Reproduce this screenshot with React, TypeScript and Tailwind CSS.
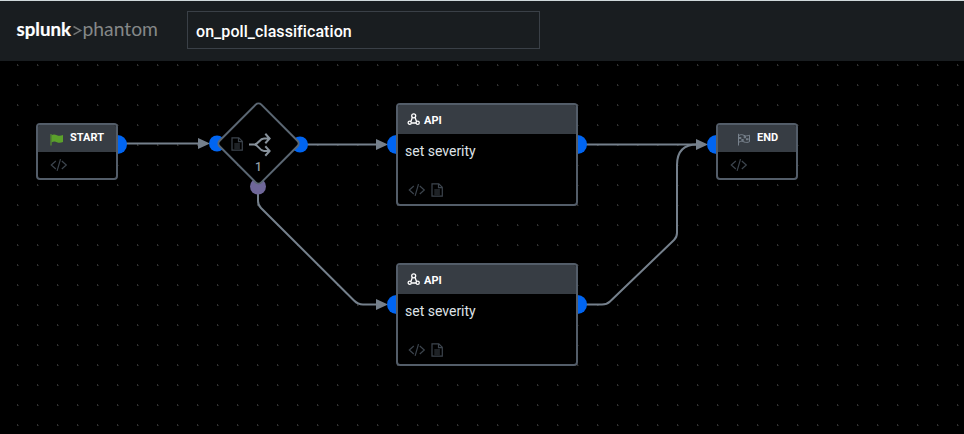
import type { ReactNode } from "react";

function CodeIcon() {
  return (
    <svg width="18" height="14" viewBox="0 0 18 14" fill="none" stroke="#3c444d" strokeWidth="1.2">
      <path d="M5.800 3 1.300 7l4.500 4M11.800 3l4.500 4-4.500 4M10.500 1.200 7.100 12.800" />
    </svg>
  );
}

function DocIcon() {
  return (
    <svg width="12" height="14" viewBox="0 0 12 14" fill="none" stroke="#3c444d" strokeWidth="1.200">
      <path d="M1 .9h6.800L11.300 4.300v8.900H1zM7.500 1v3.700H11M3.300 7h5.600M3.300 9h5.600M3.300 11h5.600" />
    </svg>
  );
}

function ApiIcon() {
  return (
    <svg width="13" height="13" viewBox="0 0 13 13" fill="none" stroke="#fff" strokeWidth="1.300">
      <circle cx="6.700" cy="2.800" r="2" />
      <circle cx="2.700" cy="9.700" r="1.600" />
      <circle cx="10.700" cy="9.700" r="1.600" />
      <path d="M5.300 4.500 4 8.300M8.100 4.500l1.300 3.800M4.400 10h4.600" />
    </svg>
  );
}

function FlagIcon() {
  return (
    <svg width="14" height="13" viewBox="0 0 14 13">
      <path d="M1 1v11.500" stroke="#5ba12b" strokeWidth="1" />
      <path d="M1.500 2.200c2-1.200 3.600-.8 5.400 0 1.900.8 4 .7 6.100-.2v7c-2.100 1-4.200 1-6.100.2-1.800-.8-3.400-.8-5.400.2z" fill="#5ba12b" />
    </svg>
  );
}

function CheckeredFlagIcon() {
  return (
    <svg width="14" height="13" viewBox="0 0 14 13" fill="none" stroke="#78828d">
      <path d="M1.500 .8v11.700" />
      <path d="M2 2.400c2-1.200 3.400-.8 5 0 1.900.8 3.700.6 5.500-.2v6.500c-1.800.9-3.600 1-5.500.2-1.600-.8-3-.8-5 .2" />
      <path d="M2 4h2.300v2H2zM6.700 3h2.300v2.200H6.700zM4.400 6h2.300v2H4.400zM9 5.200h2.600v2H9z" fill="#78828d" stroke="none" opacity=".9" />
    </svg>
  );
}

function SmallNode({ place, label, flag }: { place: string; label: string; flag: ReactNode }) {
  return (
    <div className={`absolute top-[62px] flex h-[57px] w-[82px] flex-col overflow-hidden rounded-[4px] border-2 border-[#535d69] bg-black ${place}`}>
      <div className="flex h-[27px] shrink-0 items-center bg-[#373d44] pb-[3px] pl-3">
        <span className="flex w-5 pt-[4px]">{flag}</span>
        <span className={`text-[11px] font-bold leading-none text-white ${label === "END" ? "ml-[7px]" : ""}`}>{label}</span>
      </div>
      <div className="flex flex-1 items-center pb-px pl-[12px]">
        <CodeIcon />
      </div>
    </div>
  );
}

function ApiNode({ place }: { place: string }) {
  return (
    <div className={`absolute left-[396px] flex h-[102.5px] w-[182px] flex-col overflow-hidden rounded-[4px] border-2 border-[#535d69] bg-black ${place}`}>
      <div className="flex h-[29px] shrink-0 items-center gap-1 bg-[#373d44] pl-[9px]">
        <ApiIcon />
        <span className="pt-[2px] text-[11px] font-bold leading-none text-white">API</span>
      </div>
      <div className="pl-[7px] pt-[7px] text-[14px] leading-5 text-[#dfe3e7]">set severity</div>
      <div className="mt-auto flex items-center gap-[5px] pb-[7px] pl-[10px]">
        <CodeIcon />
        <DocIcon />
      </div>
    </div>
  );
}

/* Connectors and ports sit beneath the blocks. */
function Wires() {
  return (
    <svg className="absolute inset-0" width="964" height="373" viewBox="0 61 964 373" fill="none">
      <g stroke="#75808c" strokeWidth="2">
        <path d="M126 143.500H200M306 144.500H378M586 144.500H698M258 193v8q0 4 3 7L354 300.500q4 4 9 4h15" />
        <path d="M586 304.500h16q5 0 8-3L674 240q3-3 3-7V165q0-20.500 20-20.500" />
      </g>
      <g fill="#75808c">
        <path d="M198 138v11l12-5.500zM376 139v11l12-5.500zM376 299v11l12-5.500zM696 139v11l12-5.500z" />
      </g>
      <g fill="#0065f2">
        <circle cx="117.500" cy="144.500" r="9.500" />
        <circle cx="217" cy="143.500" r="8" />
        <circle cx="300" cy="144.500" r="8" />
        <circle cx="396.500" cy="144.500" r="9.500" />
        <circle cx="577.500" cy="144.500" r="9.500" />
        <circle cx="396.500" cy="304.500" r="9.500" />
        <circle cx="577.500" cy="304.500" r="9.500" />
        <circle cx="716.500" cy="144.500" r="9.500" />
      </g>
      <circle cx="258" cy="186.500" r="8" fill="#6f6799" />
    </svg>
  );
}

function Decision() {
  return (
    <div className="absolute left-[216px] top-[41px] h-[84px] w-[84px]">
      <svg className="absolute inset-0" width="84" height="84" viewBox="216 102 84 84" fill="none">
        <rect x="229" y="114" width="59" height="59" rx="4" transform="rotate(45 258.500 143.500)" fill="#000" stroke="#5b6773" strokeWidth="2" />
        <g stroke="#87919b" strokeWidth="2">
          <path d="M249 144.500h5c5 0 5-6 10-6h5M254 144.500c5 0 5 6.500 10 6.500h5M265.300 133.800l4.300 4.700-4.300 4.700M265.300 146.300l4.300 4.700-4.300 4.700" />
        </g>
      </svg>
      <div className="absolute left-[15px] top-[35px]">
        <DocIcon />
      </div>
      <div className="absolute left-[39px] top-[59px] text-[12px] font-medium leading-3 text-[#929ca6]">1</div>
    </div>
  );
}

export default function App() {
  return (
    <div className="flex h-[434px] w-[964px] flex-col overflow-hidden bg-black font-['Roboto',sans-serif]">
      <header className="flex h-[61px] shrink-0 items-start border-t border-[#cfd8da] bg-[#191d20]">
        <svg className="ml-4 mt-[13px]" width="144" height="32" viewBox="16 14 144 32">
          <text x="16.500" y="36" fontFamily="Lato, sans-serif" fontSize="19" fontWeight="700" fill="#fff" stroke="#fff" strokeWidth=".2" textLength="54.500" lengthAdjust="spacingAndGlyphs">splunk</text>
          <path d="M73.500 26.500l7.200 4.100-7.200 4.100" fill="none" stroke="#747777" strokeWidth="1.500" />
          <text x="82.500" y="36" fontFamily="Lato, sans-serif" fontSize="19" fontWeight="400" fill="#858888" textLength="75.500" lengthAdjust="spacingAndGlyphs">phantom</text>
        </svg>
        <div className="ml-[27px] mt-[10px] flex h-[38px] w-[353px] items-center border border-[#3a4047] pl-2 pt-[3px] text-[16px] font-medium tracking-[0.07px] text-white">
          on_poll_classification
        </div>
      </header>
      <main className="relative flex-1 overflow-hidden bg-black">
        <svg className="absolute inset-0" width="964" height="373">
          <defs>
            <pattern id="dots" x="17" y="3" width="20" height="20" patternUnits="userSpaceOnUse">
              <rect width="1" height="2" fill="#303030" />
              <rect x="1" y="1" width="1" height="1" fill="#1c1c1c" />
            </pattern>
          </defs>
          <rect width="964" height="373" fill="url(#dots)" />
        </svg>
        <Wires />
        <SmallNode place="left-[36px]" label="START" flag={<FlagIcon />} />
        <Decision />
        <ApiNode place="top-[42px]" />
        <ApiNode place="top-[202px]" />
        <SmallNode place="left-[716px]" label="END" flag={<span className="ml-[7px]"><CheckeredFlagIcon /></span>} />
      </main>
    </div>
  );
}
